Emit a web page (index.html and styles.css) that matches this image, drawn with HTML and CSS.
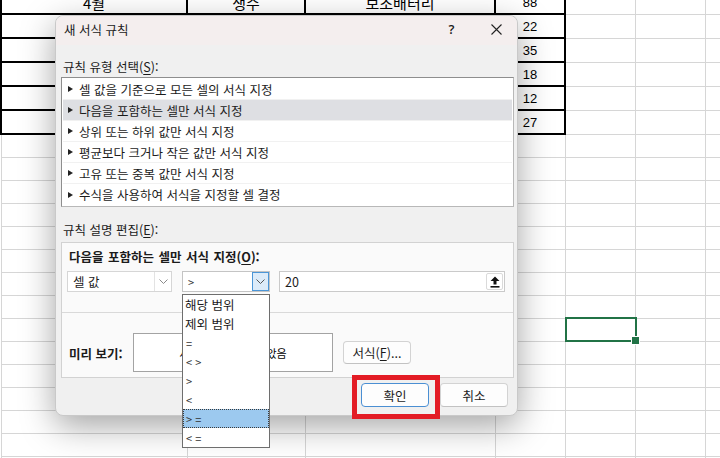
FILE: index.html
```html
<!DOCTYPE html>
<html lang="ko">
<head>
    <meta charset="UTF-8">
    <title>새 서식 규칙</title>
    <link rel="stylesheet" href="styles.css">
</head>
<body>
    <table class="grid">
        <colgroup>
            <col class="col-a"><col class="col-b"><col class="col-c"><col class="col-d">
            <col class="col-n"><col class="col-n"><col class="col-n">
        </colgroup>
        <tr class="data"><td class="b kr">4월</td><td class="b kr">생수</td><td class="b kr">보조배터리</td><td class="b">88</td><td></td><td></td><td></td></tr>
        <tr class="data"><td class="b"></td><td class="b"></td><td class="b"></td><td class="b">22</td><td></td><td></td><td></td></tr>
        <tr class="data"><td class="b"></td><td class="b"></td><td class="b"></td><td class="b">35</td><td></td><td></td><td></td></tr>
        <tr class="data"><td class="b"></td><td class="b"></td><td class="b"></td><td class="b">18</td><td></td><td></td><td></td></tr>
        <tr class="data"><td class="b"></td><td class="b"></td><td class="b"></td><td class="b">12</td><td></td><td></td><td></td></tr>
        <tr class="data last"><td class="b"></td><td class="b"></td><td class="b"></td><td class="b">27</td><td></td><td></td><td></td></tr>
        <tr><td></td><td></td><td></td><td></td><td></td><td></td><td></td></tr>
        <tr><td></td><td></td><td></td><td></td><td></td><td></td><td></td></tr>
        <tr><td></td><td></td><td></td><td></td><td></td><td></td><td></td></tr>
        <tr><td></td><td></td><td></td><td></td><td></td><td></td><td></td></tr>
        <tr><td></td><td></td><td></td><td></td><td></td><td></td><td></td></tr>
        <tr><td></td><td></td><td></td><td></td><td></td><td></td><td></td></tr>
        <tr><td></td><td></td><td></td><td></td><td></td><td></td><td></td></tr>
        <tr><td></td><td></td><td></td><td></td><td></td><td></td><td></td></tr>
        <tr><td></td><td></td><td></td><td></td><td class="sel"></td><td></td><td></td></tr>
        <tr><td></td><td></td><td></td><td></td><td></td><td></td><td></td></tr>
        <tr><td></td><td></td><td></td><td></td><td></td><td></td><td></td></tr>
        <tr><td></td><td></td><td></td><td></td><td></td><td></td><td></td></tr>
        <tr><td></td><td></td><td></td><td></td><td></td><td></td><td></td></tr>
        <tr><td></td><td></td><td></td><td></td><td></td><td></td><td></td></tr>
        <tr><td></td><td></td><td></td><td></td><td></td><td></td><td></td></tr>
    </table>

    <div class="dialog">
        <div class="dlg-title">
            <span class="dlg-caption">새 서식 규칙</span>
            <span class="dlg-btn help">?</span>
            <span class="dlg-btn close">
                <svg width="11" height="11" viewBox="0 0 11 11"><path d="M0.5 0.5 L10.5 10.5 M10.5 0.5 L0.5 10.5" stroke="#222" stroke-width="1.1" fill="none"/></svg>
            </span>
        </div>
        <div class="dlg-body">
            <div class="label first">규칙 유형 선택(<u>S</u>):</div>
            <ul class="rule-types">
                <li>셀 값을 기준으로 모든 셀의 서식 지정</li>
                <li class="active">다음을 포함하는 셀만 서식 지정</li>
                <li>상위 또는 하위 값만 서식 지정</li>
                <li>평균보다 크거나 작은 값만 서식 지정</li>
                <li>고유 또는 중복 값만 서식 지정</li>
                <li>수식을 사용하여 서식을 지정할 셀 결정</li>
            </ul>

            <div class="label">규칙 설명 편집(<u>E</u>):</div>
            <div class="group">
                <div class="group-top">
                    <div class="group-head">다음을 포함하는 셀만 서식 지정(<u>O</u>):</div>
                    <div class="cond-row">
                        <div class="combo c1">
                            <span class="combo-text">셀 값</span>
                            <span class="combo-arrow">
                                <svg width="9" height="5" viewBox="0 0 9 5"><path d="M0.5 0.5 L4.5 4.5 L8.5 0.5" fill="none" stroke="#8a8a8a"/></svg>
                            </span>
                        </div>
                        <div class="combo c2">
                            <span class="combo-text sym">&gt;</span>
                            <span class="combo-arrow hot">
                                <svg width="9" height="5" viewBox="0 0 9 5"><path d="M0.5 0.5 L4.5 4.5 L8.5 0.5" fill="none" stroke="#555"/></svg>
                            </span>
                            <ul class="drop">
                                <li>해당 범위</li>
                                <li>제외 범위</li>
                                <li class="sym">=</li>
                                <li class="sym">&lt; &gt;</li>
                                <li class="sym">&gt;</li>
                                <li class="sym">&lt;</li>
                                <li class="sym picked">&gt; =</li>
                                <li class="sym">&lt; =</li>
                            </ul>
                        </div>
                        <div class="field">
                            <span class="field-text">20</span>
                            <span class="collapse-btn">
                                <svg width="10" height="12" viewBox="0 0 10 12"><path d="M5 0.5 L9.5 5 H6.5 V8.5 H3.5 V5 H0.5 Z" fill="#111"/><rect x="0.5" y="10" width="9" height="1.6" fill="#111"/></svg>
                            </span>
                        </div>
                    </div>
                </div>
                <div class="group-bottom">
                    <span class="preview-label">미리 보기:</span>
                    <div class="preview">서식이 설정되지 않았음</div>
                    <button class="btn fmt">서식(<u>F</u>)...</button>
                </div>
            </div>

            <div class="actions">
                <button class="btn default">확인</button>
                <button class="btn">취소</button>
            </div>
        </div>
    </div>

    <div class="callout"></div>
</body>
</html>
```

FILE: styles.css
```css
* {
    box-sizing: border-box;
}
body {
    margin: 0;
    width: 720px;
    height: 458px;
    overflow: hidden;
    position: relative;
    background: #ffffff;
    font-family: "Noto Sans CJK KR", sans-serif;
    font-size: 12.5px;
    color: #1b1b1b;
}

/* sheet */
.grid {
    border-collapse: collapse;
    table-layout: fixed;
    width: 774px;
    margin-top: -11px;
    font-family: "Liberation Sans", "Noto Sans CJK KR", sans-serif;
    font-size: 13px;
    color: #000;
}
.col-a { width: 186px; }
.col-b { width: 118px; }
.col-c { width: 190px; }
.col-d { width: 70px; }
.col-n { width: 70px; }
.grid td {
    border: 1px solid #d6d6d6;
    height: 23px;
    padding: 0;
    text-align: center;
    line-height: 20px;
}
.grid .data td {
    height: 24px;
    padding-top: 2px;
}
.grid .data.last td {
    height: 23px;
}
.grid .data td.b {
    border: 2px solid #000;
}
.grid td.kr {
    font-family: "Noto Sans CJK KR", sans-serif;
    font-size: 15px;
}
.grid td.sel {
    position: relative;
}
.grid td.sel::before {
    content: "";
    position: absolute;
    left: -1px;
    top: -2px;
    right: -2px;
    bottom: -1px;
    border: 2px solid #217346;
}
.grid td.sel::after {
    content: "";
    position: absolute;
    right: -5px;
    bottom: -4px;
    width: 7px;
    height: 7px;
    background: #217346;
    border: 1px solid #fff;
}

/* dialog */
.dialog {
    position: absolute;
    left: 55px;
    top: 15px;
    width: 463px;
    height: 401px;
    background: #f0f0f0;
    border: 1px solid #c9c9c9;
    border-radius: 8px;
    box-shadow: 0 10px 34px rgba(0, 0, 0, 0.36);
}
.dlg-title {
    height: 29px;
    display: flex;
    align-items: center;
    padding: 0 0 3px 8px;
    background: #f4eeee;
    border-radius: 8px 8px 0 0;
}
.dlg-caption {
    flex: 1;
}
.dlg-btn {
    height: 26px;
    display: flex;
    align-items: center;
    justify-content: center;
}
.dlg-btn.help {
    width: 50px;
    padding-left: 3px;
    font-family: "Open Sans", sans-serif;
    font-size: 13px;
    font-weight: 600;
}
.dlg-btn.close {
    width: 42px;
    padding-top: 1px;
}
.dlg-body {
    padding: 0 3px 8px 5px;
}
.label {
    line-height: 16px;
    margin: 15px 0 4px;
    padding-left: 2px;
}
.label.first {
    margin: 14px 0 2px;
}
u {
    text-underline-offset: 2px;
}

.rule-types {
    list-style: none;
    margin: 0;
    padding: 1px;
    background: #fff;
    border: 1px solid #8e8e8e;
    border-right-color: #b8b8b8;
    border-bottom-color: #b8b8b8;
}
.rule-types li {
    height: 21px;
    display: flex;
    align-items: center;
    gap: 6px;
    padding-left: 5px;
    border-bottom: 1px solid #f1f1f1;
}
.rule-types li:last-child {
    border-bottom: 0;
}
.rule-types li::before {
    content: "";
    border-top: 3.5px solid transparent;
    border-bottom: 3.5px solid transparent;
    border-left: 5px solid #222;
}
.rule-types li.active {
    background: #dedfe3;
}

.group {
    background: #fafafa;
    border: 1px solid #d2d2d2;
}
.group-top {
    padding: 6px 5px 20px;
    border-bottom: 1px solid #d9d9d9;
}
.group-head {
    font-weight: bold;
    line-height: 16px;
    padding-left: 2px;
    word-spacing: 1px;
}
.cond-row {
    display: flex;
    margin-top: 6px;
}
.combo {
    position: relative;
    height: 21px;
    display: flex;
    align-items: center;
    background: #fff;
    border: 1px solid #d6d6d6;
}
.combo.c1 {
    width: 105px;
    margin-right: 10px;
}
.combo.c2 {
    width: 88px;
    margin-right: 9px;
    border-color: #c4c4c4;
}
.combo-text {
    padding-left: 5px;
}
.sym {
    font-size: 11px;
    color: #333;
}
.combo-arrow {
    margin-left: auto;
    width: 17px;
    height: 100%;
    display: flex;
    align-items: center;
    justify-content: center;
    border-left: 1px solid #e3e3e3;
}
.combo-arrow.hot {
    border: 1px solid #4c96d7;
    background: #dcebf9;
}

.drop {
    position: absolute;
    left: -1px;
    right: -1px;
    top: calc(100% + 3px);
    list-style: none;
    margin: 0;
    padding: 0;
    background: #fff;
    border: 1px solid #6e6e6e;
    z-index: 2;
}
.drop li {
    height: 19px;
    display: flex;
    align-items: center;
    padding-left: 2px;
}
.drop li.sym {
    font-size: 11px;
    padding-left: 3px;
}
.drop li.picked {
    background: #9cc9ef;
    border: 1px dotted #3a3a3a;
    padding-left: 2px;
}

.field {
    width: 226px;
    height: 21px;
    display: flex;
    align-items: center;
    background: #fff;
    border: 1px solid #cacaca;
}
.field-text {
    padding-left: 5px;
}
.collapse-btn {
    margin-left: auto;
    margin-right: 1px;
    width: 17px;
    height: 17px;
    display: flex;
    align-items: center;
    justify-content: center;
    background: #fff;
    border: 1px solid #dadada;
    border-radius: 2px;
}

.group-bottom {
    display: flex;
    align-items: center;
    padding: 20px 0 5px 7px;
}
.preview-label {
    width: 64px;
    font-weight: bold;
    padding-top: 2px;
}
.preview {
    width: 200px;
    height: 39px;
    display: flex;
    align-items: center;
    justify-content: center;
    background: #fff;
    border: 1px solid #a3a3a3;
    font-size: 11px;
    color: #000;
}
.btn {
    width: 68px;
    height: 24px;
    padding: 0;
    font: inherit;
    color: #1b1b1b;
    background: #fdfdfd;
    border: 1px solid #d3d3d3;
    border-bottom-color: #c2c2c2;
    border-radius: 4px;
}
.btn.fmt {
    height: 23px;
    margin-left: 10px;
}
.btn.default {
    border: 1px solid #4a8fd3;
}
.actions {
    display: flex;
    justify-content: flex-end;
    gap: 11px;
    margin-top: 5px;
    padding-right: 6px;
}

/* red highlight box drawn over the screenshot */
.callout {
    position: absolute;
    left: 352px;
    top: 375px;
    width: 88px;
    height: 44px;
    border: 5px solid #e31c25;
}
```
